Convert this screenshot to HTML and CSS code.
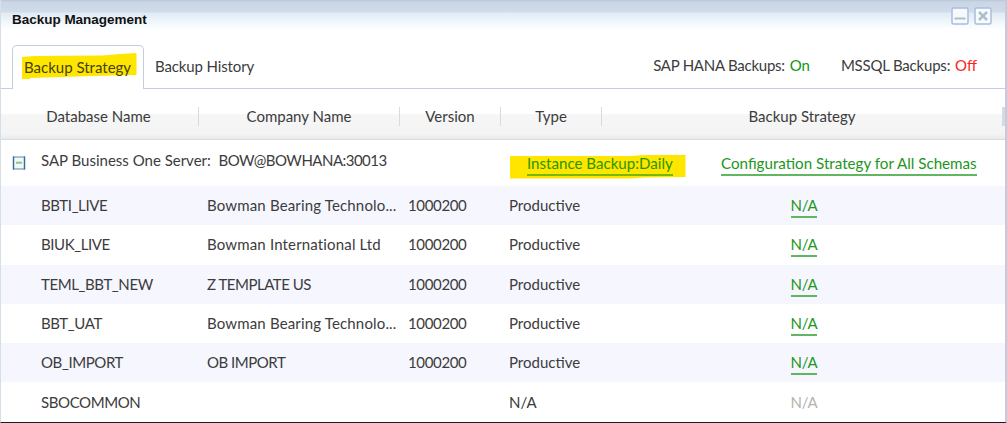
FILE: index.html
```html
<!DOCTYPE html>
<html lang="en">
<head>
<meta charset="utf-8">
<title>Backup Management</title>
<link rel="stylesheet" href="styles.css">
</head>
<body>
<div class="window">
  <header class="titlebar">
    <h1>Backup Management</h1>
    <div class="controls">
      <svg width="18" height="18" viewBox="0 0 18 18"><rect x="1" y="1" width="16" height="16" rx="1.5" class="box"/><path d="M3.500 11.500H14.500" class="glyph"/></svg>
      <svg width="18" height="18" viewBox="0 0 18 18"><rect x="1" y="1" width="16" height="16" rx="1.5" class="box"/><path d="M5 5L13 13M13 5L5 13" class="glyph cross"/></svg>
    </div>
  </header>
  <nav class="tabs">
    <div class="tab active">
      <svg class="mark" width="115" height="27" viewBox="0 0 115 27"><path d="M0 4L12 3L80 2.5L98 1L114.500 0V22L70 23L8 25V26H0Z"/></svg>
      <span>Backup Strategy</span>
    </div>
    <div class="tab">Backup History</div>
    <div class="tabline">
      <span class="status"><span class="hana">SAP HANA Backups:</span> <b class="on">On</b></span>
      <span class="status"><span class="mssql">MSSQL Backups:</span> <b class="off">Off</b></span>
    </div>
  </nav>
  <div class="grid head">
    <div>Database Name</div><div>Company Name</div><div>Version</div><div>Type</div><div>Backup Strategy</div>
  </div>
  <div class="server">
    <svg class="toggle" width="14" height="14" viewBox="0 0 14 14"><rect x="1.500" y="1" width="11" height="12" fill="#f4f8f4" stroke="#7fa0be" stroke-width="1.300"/><path d="M1.500 0.500V13.500M12.500 0.500V13.500" stroke="#356da0" stroke-width="1.300"/><path d="M4 6.700H10" stroke="#8fc08a" stroke-width="2"/></svg>
    <span class="name">SAP Business One Server:&nbsp; <span class="host">BOW@BOWHANA:30013</span></span>
    <div class="instance">
      <svg class="mark" width="176" height="24" viewBox="0 0 176 24"><path d="M0 1L120 1L135 0H175.500V22L135 22.500L120 23.500H0Z"/></svg>
      <a class="link daily">Instance Backup:Daily</a>
    </div>
    <a class="link config">Configuration Strategy for All Schemas</a>
  </div>
  <div class="grid row alt"><div>BBTI_LIVE</div><div class="long">Bowman Bearing Technolo...</div><div>1000200</div><div>Productive</div><div><a class="link">N/A</a></div></div>
  <div class="grid row"><div>BIUK_LIVE</div><div class="long">Bowman International Ltd</div><div>1000200</div><div>Productive</div><div><a class="link">N/A</a></div></div>
  <div class="grid row alt"><div>TEML_BBT_NEW</div><div class="caps">Z TEMPLATE US</div><div>1000200</div><div>Productive</div><div><a class="link">N/A</a></div></div>
  <div class="grid row"><div>BBT_UAT</div><div class="long">Bowman Bearing Technolo...</div><div>1000200</div><div>Productive</div><div><a class="link">N/A</a></div></div>
  <div class="grid row alt"><div>OB_IMPORT</div><div class="caps">OB IMPORT</div><div>1000200</div><div>Productive</div><div><a class="link">N/A</a></div></div>
  <div class="grid row"><div class="tight">SBOCOMMON</div><div></div><div></div><div>N/A</div><div class="muted">N/A</div></div>
</div>
</body>
</html>
```
FILE: styles.css
```css
* { box-sizing: border-box; }
body { margin: 0; background: #fff; font: 15px/20px Lato, sans-serif; color: #3c3c3c; }
.window { width: 1007px; height: 423px; overflow: hidden; border-left: 1px solid #d5dfea; border-right: 2px solid #bfcddc; border-bottom: 1px solid #1d1d1f; white-space: nowrap; }
.titlebar { height: 45px; padding: 7px 13px 0 11px; display: flex; justify-content: space-between; background: linear-gradient(#b9c6d6 0, #cad6e5 2px, #d0dce9 12px, #e1ebf4 13px, #f3f9fd 24px, #fff 30px); }
h1 { margin: 3px 0 0; font: bold 13.500px/20px "Liberation Sans", Arial, sans-serif; color: #111; letter-spacing: -0.020px; }
.controls { display: flex; gap: 5px; }
.box { fill: #f6fafd; stroke: #a9bde1; stroke-width: 1.500; }
.glyph { fill: none; stroke: #adbfca; stroke-width: 2; }
.cross { stroke-width: 2.600; }
.tabs { height: 44px; display: flex; }
.tabs::before { content: ""; width: 11px; border-bottom: 1px solid #c3cde1; }
.tab { border-bottom: 1px solid #c3cde1; padding: 11px 0 0 11px; width: 118px; letter-spacing: -0.130px; }
.tab.active { position: relative; width: 132px; border: 1px solid #c3cde1; border-bottom: 0; border-radius: 5px 5px 0 0; padding: 11px 0 0 11px; letter-spacing: 0; }
.mark { position: absolute; fill: #ffe600; }
.tab .mark { left: 9px; top: 7px; }
.tab span { position: relative; color: #45420f; }
.tabline { flex: 1; border-bottom: 1px solid #c3cde1; display: flex; justify-content: flex-end; gap: 31px; padding: 10px 28px 0 0; }
.hana { letter-spacing: -0.250px; }
.mssql { letter-spacing: -0.200px; }
b { font-weight: 400; margin-left: 1px; }
.on { color: #149414; }
.off { color: #fb2222; }
.grid { display: grid; grid-template-columns: 198px 201px 101px 101px 1fr; }
.head { height: 51px; padding-top: 18px; background: linear-gradient(#fff 25px, #f6f6f6 25px, #f4f4f4 45px, #e9e9ea 50px, #d5dce6 50px); text-align: center; line-height: 18px; }
.head div { height: 19px; border-right: 1px solid #d4dbe5; }
.head div:first-child { padding-right: 2px; }
.head div:last-child { border-right-width: 3px; }
.server { height: 46px; display: flex; align-items: flex-start; padding: 10px 0 0 11px; }
.toggle { margin: 6px 15px 0 0; }
.name { width: 469px; }
.host { letter-spacing: -0.520px; }
.instance { position: relative; width: 211px; padding: 3px 0 0 17px; }
.instance .mark { left: 0; top: 5px; }
.link { position: relative; display: inline-block; color: #229622; height: 23px; border-bottom: 2px solid #62b562; }
.daily { color: #289600; border-color: #75b900; font-size: 15.100px; }
.config { margin-top: 3px; font-size: 15.170px; }
.row { height: 39.300px; padding-top: 9px; }
.alt { background: #f6f6ff; }
.row div:nth-child(1) { padding-left: 40px; letter-spacing: -0.400px; }
.row .tight { letter-spacing: -0.650px; }
.row:last-child div { padding-top: 1px; }
.row div:nth-child(2) { padding-left: 8px; }
.long { letter-spacing: 0.160px; }
.caps { letter-spacing: -0.480px; }
.row div:nth-child(3) { padding-left: 8px; letter-spacing: -0.350px; }
.row div:nth-child(4) { padding-left: 8px; }
.row div:nth-child(5) { padding-left: 1px; text-align: center; letter-spacing: -0.250px; }
.row .muted { color: #b3b3b3; }
```
